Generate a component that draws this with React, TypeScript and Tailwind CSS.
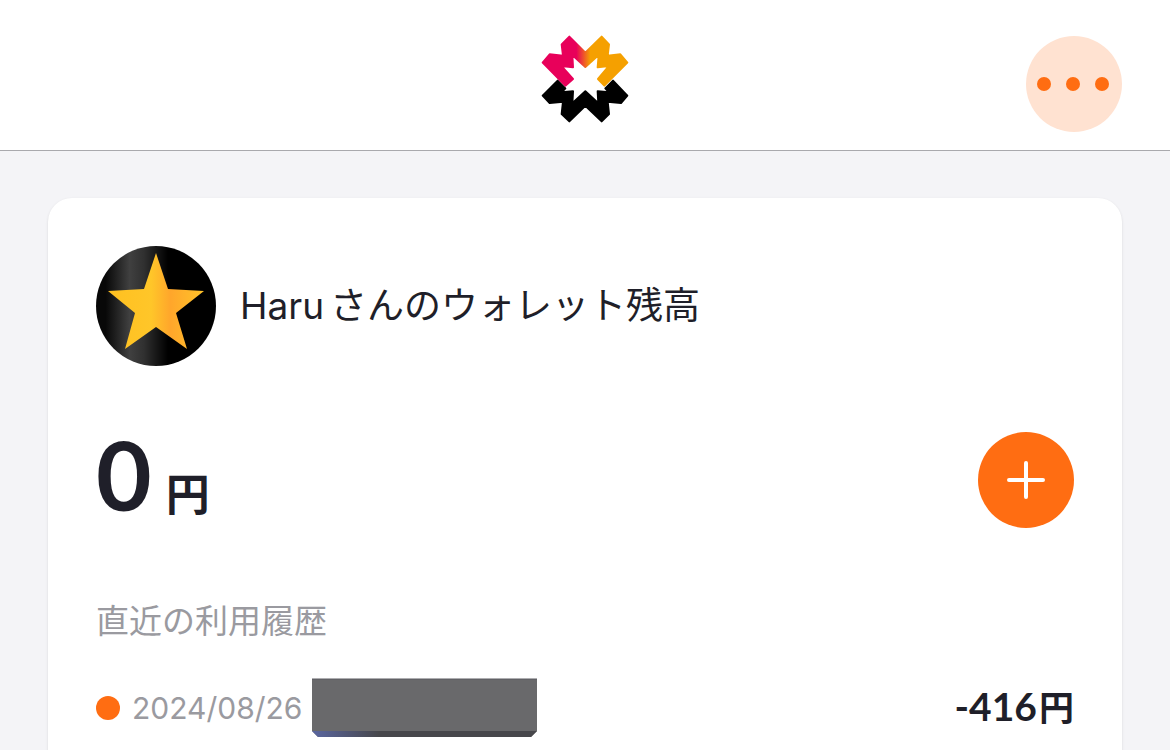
import { useId } from "react";

type HistoryItem = {
  date: string;
  amount: number;
};

const history: HistoryItem[] = [{ date: "2024/08/26", amount: -416 }];

export default function App() {
  return (
    <div className="min-h-screen bg-[#f4f4f7] text-[#1f1f29] font-['Inter','Noto_Sans_CJK_JP',sans-serif]">
      <Header />
      <main className="px-12 pt-[47px]">
        <WalletCard />
      </main>
    </div>
  );
}

function Header() {
  return (
    <header className="grid grid-cols-3 items-center border-b border-[#a9a9ad] bg-white px-12 pt-9 pb-[18px]">
      <a href="#" aria-label="ホーム" className="col-start-2 -mt-2.5 justify-self-center">
        <Logo />
      </a>
      <button
        aria-label="メニュー"
        className="flex size-24 items-center justify-center gap-[15px] justify-self-end rounded-full bg-[#ffe2d1] pr-0.5"
      >
        <span className="size-[14px] rounded-full bg-[#ff6d12]" />
        <span className="size-[14px] rounded-full bg-[#ff6d12]" />
        <span className="size-[14px] rounded-full bg-[#ff6d12]" />
      </button>
    </header>
  );
}

function WalletCard() {
  return (
    <section className="rounded-3xl bg-white p-12 shadow-sm">
      <div className="flex items-center gap-6">
        <Avatar />
        <h1 className="flex gap-[6px] text-[37px]">
          <span>Haru</span>
          <span>さんのウォレット残高</span>
        </h1>
      </div>

      {/* balance */}
      <div className="mt-[66px] flex h-24 items-center justify-between">
        <p className="flex items-baseline gap-3.5 pt-2 font-['Lato','Noto_Sans_CJK_JP',sans-serif] font-bold">
          <span className="text-8xl leading-24">0</span>
          <span className="text-[44px] leading-24">円</span>
        </p>
        <button
          aria-label="チャージ"
          className="flex size-24 items-center justify-center rounded-full bg-[#ff6d12]"
        >
          <svg viewBox="0 0 38 38" className="size-[38px]" stroke="#fff" strokeWidth="4" strokeLinecap="round">
            <path d="M19 2v34M2 19h34" />
          </svg>
        </button>
      </div>

      {/* history */}
      <h2 className="mt-[69px] text-[33px] leading-12 text-[#9a9aa0]">直近の利用履歴</h2>
      <ul className="mt-[33px]">
        {history.map((item) => (
          <li key={item.date} className="flex items-center">
            <span className="size-6 rounded-full bg-[#ff6d12]" />
            <time className="ml-3 text-3xl text-[#9a9aa0]">{item.date}</time>
            <Redacted />
            <p className="ml-auto flex items-baseline gap-0.5 pb-1 font-['Lato','Noto_Sans_CJK_JP',sans-serif] font-bold">
              <span className="text-[39px] leading-13">{item.amount}</span>
              <span className="text-[35px] leading-13">円</span>
            </p>
          </li>
        ))}
      </ul>
    </section>
  );
}

function Logo() {
  const id = useId();
  return (
    <svg viewBox="32 31 264 264" className="size-[88px]">
      <defs>
        <linearGradient id={id} gradientUnits="userSpaceOnUse" x1="138" y1="0" x2="180" y2="0">
          <stop offset="0" stopColor="#e8005a" />
          <stop offset="1" stopColor="#f5a000" />
        </linearGradient>
      </defs>
      <g strokeLinejoin="round" strokeWidth="6">
        <path
          d="M82 168L105 191L94 203L128 200L126 236L165 200L204 236L202 200L236 203L225 191L248 168L291 213L272 235L232 231L236 268L214 290L165 243L117 290L94 268L98 231L58 235L37 213Z"
          fill="#000"
          stroke="#000"
        />
        <path
          d="M117 36L165 84L214 36L236 59L232 93L270 89L291 114L222 183L203 163L236 124L202 128L205 91L165 127L126 91L128 128L93 124L128 163L105 183L37 114L58 89L98 93L94 59Z"
          fill={`url(#${id})`}
          stroke={`url(#${id})`}
        />
      </g>
    </svg>
  );
}

function Avatar() {
  const id = useId();
  return (
    <svg viewBox="0 0 120 120" className="size-30 shrink-0">
      <defs>
        <linearGradient id={id + "bg"}>
          <stop offset="0.08" stopColor="#080808" />
          <stop offset="0.28" stopColor="#404040" />
          <stop offset="0.4" stopColor="#303030" />
          <stop offset="0.6" stopColor="#000" />
        </linearGradient>
        <linearGradient id={id + "star"}>
          <stop offset="0" stopColor="#ffc020" />
          <stop offset="0.45" stopColor="#ffc629" />
          <stop offset="0.65" stopColor="#ffa62b" />
          <stop offset="1" stopColor="#ffc329" />
        </linearGradient>
      </defs>
      <circle cx="60" cy="60" r="60" fill={`url(#${id}bg)`} />
      <path
        d="M60 7L72 43L108 45L80 67L91 103L60 81L29 103L39 67L12 45L48 43Z"
        fill={`url(#${id}star)`}
      />
    </svg>
  );
}

// Hidden shop name
function Redacted() {
  const id = useId();
  return (
    <svg viewBox="0 0 225 60" className="ml-[10px] h-[60px] w-[225px]">
      <defs>
        <linearGradient id={id}>
          <stop offset="0" stopColor="#5a66a0" />
          <stop offset="0.3" stopColor="#47474b" />
        </linearGradient>
      </defs>
      <path d="M0 1H225V53L219 59H6L0 53Z" fill="#69696b" />
      <path d="M0 53H225L219 59H6Z" fill={`url(#${id})`} />
      <path d="M0 1H225" stroke="#5b5b60" />
    </svg>
  );
}
